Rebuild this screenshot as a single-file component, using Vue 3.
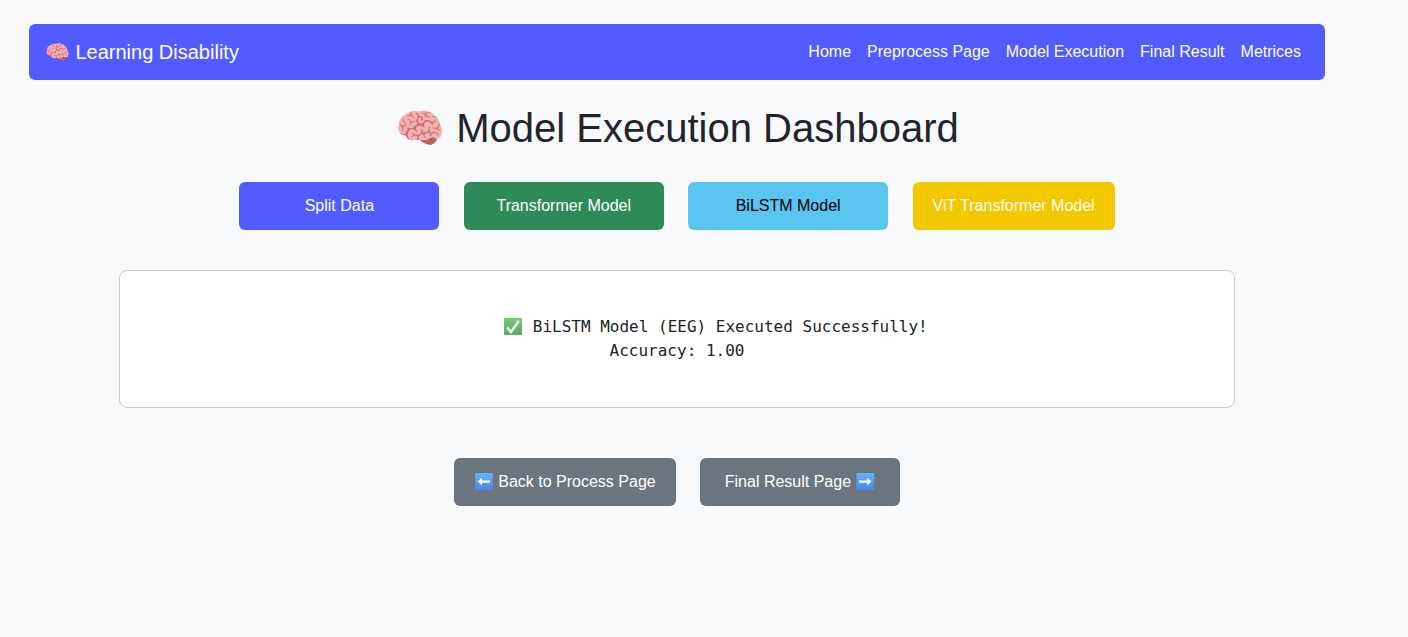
<script setup>
const links = ['Home', 'Preprocess Page', 'Model Execution', 'Final Result', 'Metrices']
const actions = [
  { label: 'Split Data', kind: 'primary' },
  { label: 'Transformer Model', kind: 'success' },
  { label: 'BiLSTM Model', kind: 'info' },
  { label: 'ViT Transformer Model', kind: 'warning' }
]
</script>

<template>
  <div class="page">
    <svg class="defs" width="0" height="0" aria-hidden="true">
      <defs>
        <linearGradient id="blue" x1="0" y1="0" x2="0" y2="1">
          <stop offset="0" stop-color="#64b5f6" />
          <stop offset="1" stop-color="#4a86ec" />
        </linearGradient>
        <linearGradient id="green" x1="0" y1="0" x2="0" y2="1">
          <stop offset="0" stop-color="#7bc67e" />
          <stop offset="1" stop-color="#56ad59" />
        </linearGradient>
      </defs>
    </svg>
    <nav class="navbar">
      <a class="brand"><span class="brain">🧠</span> Learning Disability</a>
      <ul class="links">
        <li v-for="link in links" :key="link">{{ link }}</li>
      </ul>
    </nav>
    <h1 class="title"><span class="brain">🧠</span> Model Execution Dashboard</h1>
    <div class="actions">
      <button v-for="a in actions" :key="a.label" class="btn" :class="a.kind">{{ a.label }}</button>
    </div>
    <div class="output">
      <div class="line first"><svg class="icon" viewBox="0 0 19.9 20" aria-label="Done">
          <rect x="1" y="1" width="18" height="17" rx="0.5" fill="url(#green)" />
          <path d="M4 10.4 8 15 15.8 4" fill="none" stroke="#f4f6f4" stroke-width="2.5" />
        </svg> BiLSTM Model (EEG) Executed Successfully!</div>
      <div class="line">Accuracy: 1.00</div>
    </div>
    <div class="footer">
      <button class="btn secondary"><svg class="icon" viewBox="0 0 19.9 20" aria-hidden="true">
          <rect x="1" y="1" width="17.8" height="17" rx="0.5" fill="url(#blue)" />
          <path d="M3.6 9.6 8 5.7V8.6H16V10.8H8V13.5Z" fill="#fff" />
        </svg> Back to Process Page</button>
      <button class="btn secondary">Final Result Page <svg class="icon" viewBox="0 0 19.9 20" aria-hidden="true">
          <rect x="1.4" y="1" width="17.8" height="17" rx="0.5" fill="url(#blue)" />
          <path d="M16.6 9.6 12.2 5.7V8.6H4.2V10.8H12.2V13.5Z" fill="#fff" />
        </svg></button>
    </div>
  </div>
</template>

<style>
body {
  margin: 0;
  background: #f8f9fb;
}
</style>

<style scoped>
.page {
  box-sizing: border-box;
  width: 1296px;
  margin-left: 29px;
  padding-top: 24px;
  font-family: "Liberation Sans", "Noto Color Emoji", sans-serif;
  font-size: 16px;
  line-height: 24px;
  color: #212529;
}
.defs {
  position: absolute;
}
.icon {
  width: 19.9px;
  height: 20px;
  vertical-align: -5px;
}
.brain {
  display: inline-block;
  filter: saturate(0.82) brightness(0.98);
}
.navbar {
  box-sizing: border-box;
  height: 56px;
  padding: 0 16px;
  display: flex;
  align-items: center;
  justify-content: space-between;
  background: #525bff;
  border-radius: 6px;
  color: #fff;
}
.brand {
  font-size: 20px;
  line-height: 30px;
}
.links {
  display: flex;
  margin: 0;
  padding: 0;
  list-style: none;
}
.links li {
  padding: 8px;
}
.title {
  margin: 24px 0 30px;
  font-size: 40px;
  line-height: 48px;
  font-weight: 400;
  text-align: center;
}
.actions,
.footer {
  display: flex;
  justify-content: center;
  gap: 24.4px;
}
.btn {
  box-sizing: border-box;
  min-width: 200px;
  height: 48px;
  padding: 0 20px;
  border: 0;
  border-radius: 6px;
  font: inherit;
  color: #fff;
}
.primary { background: #525bff; }
.success { background: #2e8b57; }
.info { background: #5bc5f2; color: #000; }
.warning { background: #f4c800; }
.secondary { background: #6c757d; }
.output {
  box-sizing: border-box;
  width: 1116px;
  height: 138px;
  margin: 40px auto 50px;
  padding-top: 44px;
  background: #fff;
  border: 1px solid #ccc;
  border-radius: 8px;
  font-family: "DejaVu Sans Mono", "Noto Color Emoji", monospace;
  text-align: center;
}
.line {
  height: 24px;
  white-space: nowrap;
}
.first {
  padding-left: 77px;
}
</style>
